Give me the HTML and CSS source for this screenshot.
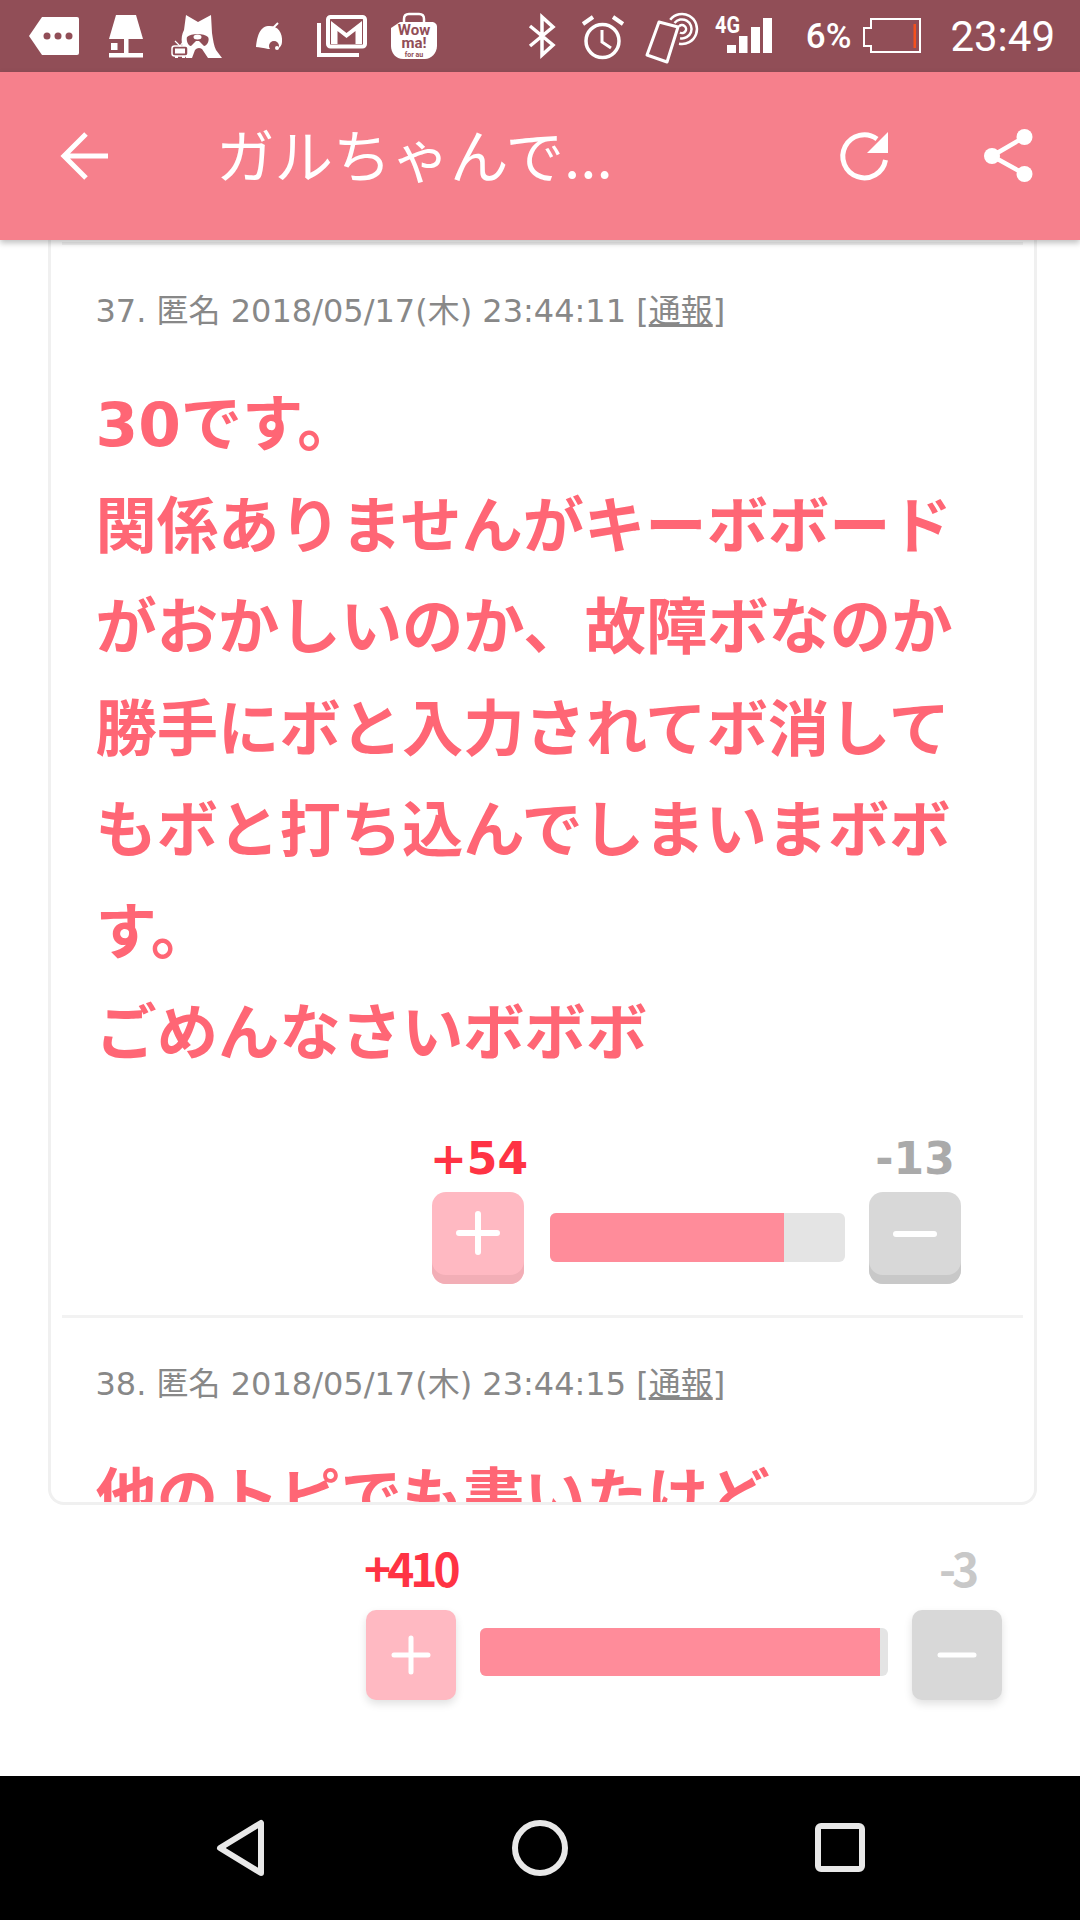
FILE: index.html
```html
<!DOCTYPE html>
<html lang="ja">
<head>
  <meta charset="UTF-8" /><meta name="viewport" content="width=device-width, initial-scale=1"/>
  <title>ガルちゃんで...</title>
  <link rel="stylesheet" href="styles.css">
</head>
<body>
  <div class="phone">
    <!-- status bar, icons use page coordinates in their viewBox -->
    <div class="status">
      <div class="status-left">
        <svg class="ico" width="74" height="72" viewBox="20 0 74 72">
          <path fill="#fff" d="M29 36 L42 17 H77 a2 2 0 0 1 2 2 V53 a2 2 0 0 1 -2 2 H42 Z"/>
          <g fill="#914e57"><circle cx="47" cy="36" r="3.5"/><circle cx="58" cy="36" r="3.5"/><circle cx="69" cy="36" r="3.5"/></g>
        </svg>
        <svg class="ico" width="64" height="72" viewBox="94 0 64 72">
          <path fill="#fff" d="M116 15 H136 L143 39 H109 Z"/>
          <rect fill="#fff" x="124" y="39" width="4.5" height="15"/>
          <rect fill="#fff" x="109" y="53" width="34" height="4.5"/>
          <rect fill="#fff" x="111" y="43" width="6.5" height="7"/>
        </svg>
        <svg class="ico" width="82" height="72" viewBox="158 0 82 72">
          <path fill="#fff" d="M186 15 L198 22 L211 15 L212 33 C213 40 214 46 216 50 L222 58 H208 L202 49 C199 47 197 48 195 50 L192 58 H186 L182 44 C181 38 182 34 184 30 Z"/>
          <path fill="#914e57" d="M187 37 C191 33 204 33 208 37 C210 40 207 46 204 46 L199 41 H196 L191 46 C188 46 186 40 187 37 Z"/>
          <ellipse fill="#fff" cx="197.500" cy="37" rx="4" ry="2.500"/>
          <rect fill="#914e57" stroke="#fff" stroke-width="1.500" x="172" y="46" width="16" height="10" rx="2.500"/>
          <rect fill="#fff" x="175" y="48.500" width="10" height="5"/>
          <path fill="none" stroke="#fff" stroke-width="1.200" d="M175 41 L180 46 L183 42"/>
          <rect fill="#fff" x="175" y="56" width="3" height="2"/><rect fill="#fff" x="182" y="56" width="3" height="2"/>
        </svg>
        <svg class="ico" width="60" height="72" viewBox="240 0 60 72">
          <path fill="#fff" d="M256 47 C257 38 259 27 268 26 C277 25 283 32 282 42 C282 45 280 48 277 49 L268 49 C264 48 259 47 256 47 Z"/>
          <circle fill="#914e57" cx="274" cy="46" r="5"/>
          <circle fill="#fff" cx="277" cy="48" r="2"/>
          <path fill="none" stroke="#fff" stroke-width="2" d="M273 28 L278 23"/>
        </svg>
        <svg class="ico" width="78" height="72" viewBox="300 0 78 72">
          <rect fill="none" stroke="#fff" stroke-width="4" x="328" y="17" width="37" height="29.500" rx="2.500"/>
          <path fill="#fff" d="M331 21 L346.500 33 L362 21 V44 H355.500 V31 L346.500 38 L337.500 31 V44 H331 Z"/>
          <path fill="none" stroke="#fff" stroke-width="4" d="M319 23 V55 H359"/>
        </svg>
        <svg class="ico" width="72" height="72" viewBox="378 0 72 72">
          <path fill="none" stroke="#fff" stroke-width="2.500" d="M404 26 V19 C404 15 407 14 409 14 H419 C422 14 424 15 424 19 V26"/>
          <path fill="#fff" d="M391 28 L400 22 H431 C435 22 437 24 437 27 V46 C437 53 431 59 425 59 H403 C396 59 391 53 391 46 Z"/>
          <g class="bag-text" fill="#914e57" text-anchor="middle">
            <text x="414" y="35" font-size="15">Wow</text>
            <text x="414" y="48" font-size="15">ma!</text>
            <text x="414" y="56.500" font-size="7">for au</text>
          </g>
        </svg>
      </div>
      <div class="status-right">
        <svg class="ico" width="260" height="72" viewBox="520 0 260 72">
          <path fill="none" stroke="#fff" stroke-width="3.500" d="M530 26 L553 45 L542 55 V17 L553 27 L530 46"/>
          <circle fill="none" stroke="#fff" stroke-width="3.500" cx="602.500" cy="41" r="16.500"/>
          <path fill="none" stroke="#fff" stroke-width="3" d="M602 30 V42 L611 48"/>
          <path fill="none" stroke="#fff" stroke-width="4" d="M583 24 L593 17 M613 17 L623 24"/>
          <path fill="none" stroke="#fff" stroke-width="3" stroke-linejoin="round" d="M659 22 L678 27 L667 62 L647 55 Z"/>
          <path fill="none" stroke="#fff" stroke-width="2.500" d="M670.200 19.700 A15 15 0 1 1 679 43.700 M674.500 23.100 A9.500 9.500 0 1 1 680.100 38.200 M679 26.500 A4 4 0 1 1 680 32.500"/>
          <text class="net" x="715" y="33" fill="#fff" font-size="24" textLength="25" lengthAdjust="spacingAndGlyphs">4G</text>
          <g fill="#fff">
            <rect x="727" y="45" width="9" height="8"/>
            <rect x="739" y="36" width="8.500" height="17"/>
            <rect x="751" y="27" width="9" height="26"/>
            <rect x="763" y="18" width="9" height="35"/>
          </g>
        </svg>
        <span class="percent">6%</span>
        <svg class="ico battery" width="58" height="72" viewBox="863 0 58 72">
          <path fill="none" stroke="#fff" stroke-width="2" d="M871 19 H920 V52 H871 V46 H864 V28 H871 Z"/>
          <rect fill="#f4511e" x="913.500" y="24" width="2.500" height="24"/>
        </svg>
        <span class="clock">23:49</span>
      </div>
    </div>

    <div class="appbar">
      <svg class="ico" width="60" height="60" viewBox="55 126 60 60">
        <path fill="none" stroke="#fff" stroke-width="5" d="M108 156 H64 M86 134 L64 156 L86 178"/>
      </svg>
      <div class="title">ガルちゃんで...</div>
      <svg class="ico" width="60" height="60" viewBox="834 126 60 60">
        <path fill="none" stroke="#fff" stroke-width="5" d="M877 139 A21.500 21.500 0 1 0 885.500 160"/>
        <path fill="#fff" d="M888 132 V153 H867 Z"/>
      </svg>
      <svg class="ico share" width="60" height="60" viewBox="978 126 60 60">
        <path fill="none" stroke="#fff" stroke-width="4.500" d="M1024.500 137 L992 156 L1024.500 174"/>
        <g fill="#fff"><circle cx="1024.500" cy="137" r="8"/><circle cx="992" cy="156" r="8"/><circle cx="1024.500" cy="174" r="8"/></g>
      </svg>
    </div>

    <div class="main">
      <div class="card">
        <div class="comment">
          <div class="meta">37. 匿名 2018/05/17(木) 23:44:11 [<u>通報</u>]</div>
          <div class="body">30です。<br>関係ありませんがキーボボードがおかしいのか、故障ボなのか勝手にボと入力されてボ消してもボと打ち込んでしまいまボボす。<br>ごめんなさいボボボ</div>
          <div class="vote">
            <span class="num-plus">+54</span>
            <span class="num-minus">-13</span>
            <div class="btn btn-plus"><svg width="44" height="44" viewBox="0 0 44 44"><path d="M22 3 V41 M3 22 H41"/></svg></div>
            <div class="bar"><div class="fill" style="width:79.3%"></div></div>
            <div class="btn btn-minus"><svg width="44" height="44" viewBox="0 0 44 44"><path d="M3 23 H41"/></svg></div>
          </div>
        </div>
        <div class="comment">
          <div class="meta">38. 匿名 2018/05/17(木) 23:44:15 [<u>通報</u>]</div>
          <div class="body">他のトピでも書いたけど</div>
        </div>
      </div>

      <div class="vote vote-topic">
        <span class="num-plus">+410</span>
        <span class="num-minus">-3</span>
        <div class="btn btn-plus"><svg width="40" height="40" viewBox="0 0 40 40"><path d="M20 3 V37 M3 20 H37"/></svg></div>
        <div class="bar"><div class="fill" style="width:98%"></div></div>
        <div class="btn btn-minus"><svg width="40" height="40" viewBox="0 0 40 40"><path d="M3 20 H37"/></svg></div>
      </div>
    </div>

    <div class="navbar">
      <svg width="60" height="60" viewBox="0 0 60 60"><path d="M10 30 L51 5 V55 Z"/></svg>
      <svg width="60" height="60" viewBox="0 0 60 60"><circle cx="30" cy="30" r="25"/></svg>
      <svg width="60" height="60" viewBox="0 0 60 60"><rect x="8" y="8" width="44" height="43" rx="3"/></svg>
    </div>
  </div>
</body>
</html>
```

FILE: styles.css
```css
* { box-sizing: border-box; margin:0; padding:0; }
body {
  font-family: "DejaVu Sans", "Noto Sans CJK JP", sans-serif;
  background: #fff;
  overflow: hidden;
}
.phone {
  display: flex;
  flex-direction: column;
  width: 1080px;
  height: 1920px;
}
.ico { display: block; flex: none; }

/* Status bar */
.status {
  display: flex;
  justify-content: space-between;
  align-items: center;
  height: 72px;
  padding: 0 25px 0 20px;
  background: #914e57;
  color: #fff;
  font-family: Roboto, sans-serif;
}
.status-left, .status-right {
  display: flex;
  align-items: center;
}
.bag-text text { font-family: Roboto, sans-serif; font-weight: bold; }
.net { font-family: Roboto, sans-serif; font-weight: bold; }
.percent { margin-left: 26px; font-size: 35px; font-weight: 500; }
.battery { margin-left: 12px; }
.clock { margin-left: 29px; font-size: 42px; }

/* App bar */
.appbar {
  position: relative;
  z-index: 1;
  display: flex;
  align-items: center;
  height: 168px;
  padding-left: 55px;
  background: #f6808c;
  box-shadow: 0 3px 6px rgba(0,0,0,0.25);
}
.title {
  flex: 1;
  margin-left: 101px;
  padding-bottom: 6px;
  color: #fff;
  font-family: "Noto Sans CJK JP", sans-serif;
  font-size: 58.5px;
  line-height: 1;
}
.share { margin: 0 42px 0 84px; }

/* Comments */
.main {
  flex: 1;
  display: flex;
  flex-direction: column;
}
.card {
  height: 1265px;
  margin: 0 43px 0 48px;
  padding: 2px 11px 0;
  border: 3px solid #f0f0f0;
  border-top: none;
  border-radius: 0 0 16px 16px;
  overflow: hidden;
}
.comment {
  padding: 44px 32px 31px 33.5px;
  border-top: 3px solid #f2f2f2;
}
.meta {
  color: #888;
  font-size: 32px;
  line-height: 44px;
  white-space: nowrap;
}
.body {
  margin-top: 41px;
  color: #ff6675;
  font-size: 61.3px;
  font-weight: bold;
  line-height: 101.5px;
}

/* Vote buttons */
.vote {
  display: grid;
  grid-template-columns: 92px 1fr 92px;
  column-gap: 26px;
  width: 529px;
  margin: 52px 30px 0 auto;
}
.vote .num-plus, .vote .num-minus {
  font-size: 44px;
  font-weight: bold;
  line-height: 44px;
  white-space: nowrap;
}
.num-plus { grid-column: 1 / 3; margin-left: -2px; color: #ff3344; }
.num-minus { grid-column: 3; color: #aaa; text-align: center; }
.btn {
  grid-row: 2;
  display: flex;
  justify-content: center;
  height: 92px;
  margin-top: 11px;
  padding-top: 19px;
  border-radius: 14px;
}
.btn path {
  fill: none;
  stroke: #fff;
  stroke-width: 6;
  stroke-linecap: round;
}
.btn-plus { background: #ffb9c2; box-shadow: inset 0 -9px 0 #f2aeb6; }
.btn-minus { background: #d8d8d8; box-shadow: inset 0 -9px 0 #c8c8c8; }
.bar {
  grid-row: 2;
  height: 49px;
  margin: 32px -2px 0 0;
  background: #e4e4e4;
  border-radius: 6px;
  overflow: hidden;
}
.fill { height: 100%; background: #ff8c9a; }

/* Vote row under the card */
.vote-topic {
  grid-template-columns: 90px 1fr 90px;
  column-gap: 24px;
  width: 636px;
  margin: 40px 78px 0 auto;
}
.vote-topic .num-plus, .vote-topic .num-minus {
  font-family: "Noto Sans CJK JP", sans-serif;
  font-size: 46px;
  letter-spacing: -4px;
}
.vote-topic .num-minus { color: #c8c8c8; }
.vote-topic .btn {
  height: 90px;
  margin-top: 21px;
  padding-top: 25px;
  border-radius: 10px;
  box-shadow: 0 4px 8px rgba(0,0,0,0.12);
}
.vote-topic .btn path { stroke-width: 5; }
.vote-topic .bar { height: 48px; margin: 39px 0 0; }

/* Nav bar */
.navbar {
  display: flex;
  justify-content: center;
  align-items: center;
  gap: 240px;
  height: 144px;
  background: #000;
}
.navbar svg * {
  fill: none;
  stroke: #e8e8e8;
  stroke-width: 6;
  stroke-linejoin: round;
}
```
